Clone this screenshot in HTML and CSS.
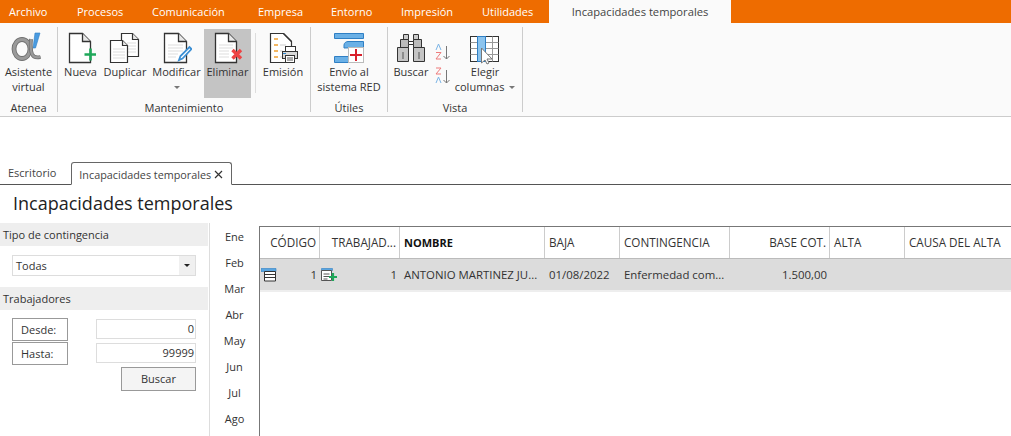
FILE: index.html
```html
<!DOCTYPE html>
<html lang="es">

<head>
    <meta charset="UTF-8">
    <title>Incapacidades temporales</title>
    <link rel="stylesheet" href="styles.css">
</head>

<body>
    <div class="menu-bar">
        <span>Archivo</span>
        <span>Procesos</span>
        <span>Comunicación</span>
        <span>Empresa</span>
        <span>Entorno</span>
        <span>Impresión</span>
        <span>Utilidades</span>
        <span class="menu-active">Incapacidades temporales</span>
    </div>

    <div class="ribbon">
        <div class="group group-atenea">
            <div class="group-items">
                <div class="rb-btn btn-asistente">
                    <svg class="rb-icon" width="38" height="34" viewBox="0 0 38 34">
                        <path d="M25 2h5l-4.500 15h-2.500z" fill="#4a9be0" stroke="#2f7fc4" stroke-width="0.600"/>
                        <ellipse cx="12" cy="18" rx="8" ry="9.500" fill="none" stroke="#6f6f6f" stroke-width="4.800"/>
                        <ellipse cx="12" cy="18" rx="8" ry="9.500" fill="none" stroke="#9a9a9a" stroke-width="3"/>
                        <path d="M21 8c-.5 6-.5 11 1 15 1.500 3.500 4.500 4 8.500 3" fill="none" stroke="#6f6f6f" stroke-width="3.800"/>
                        <path d="M21 8c-.5 6-.5 11 1 15 1.500 3.500 4.500 4 8.500 3" fill="none" stroke="#9a9a9a" stroke-width="2.200"/>
                    </svg>
                    <span>Asistente<br>virtual</span>
                </div>
            </div>
            <div class="group-name">Atenea</div>
        </div>

        <div class="group group-mant">
            <div class="group-items">
                <div class="rb-btn btn-nueva">
                    <svg class="rb-icon" width="30" height="34" viewBox="0 0 30 34">
                        <path d="M3.500 2.500h13l8 8v21h-21z" fill="#fff" stroke="#333" stroke-width="1.300"/>
                        <path d="M16.500 2.500v8h8" fill="#e8e8e8" stroke="#333" stroke-width="1.300"/>
                        <path d="M18.500 23.500h12M24.500 17.500v12" stroke="#1fa85a" stroke-width="2.600"/>
                    </svg>
                    <span>Nueva</span>
                </div>
                <div class="rb-btn btn-duplicar">
                    <svg class="rb-icon" width="32" height="34" viewBox="0 0 32 34">
                        <path d="M12.500 2.500h11l6 6v17h-17z" fill="#fff" stroke="#333" stroke-width="1.200"/>
                        <path d="M23.500 2.500v6h6" fill="#e8e8e8" stroke="#333" stroke-width="1.200"/>
                        <path d="M18 12h9M18 15h9M18 18h9M18 21h9" stroke="#ddd"/>
                        <path d="M1.500 9.500h12l5 5v17h-17z" fill="#fff" stroke="#333" stroke-width="1.200"/>
                        <path d="M13.500 9.500v5h5" fill="#e8e8e8" stroke="#333" stroke-width="1.200"/>
                        <path d="M4 18h12M4 21h12M4 24h12M4 27h12" stroke="#ddd"/>
                    </svg>
                    <span>Duplicar</span>
                </div>
                <div class="rb-btn btn-modificar">
                    <svg class="rb-icon" width="30" height="34" viewBox="0 0 30 34">
                        <path d="M2.500 2.500h14l8 8v21h-22z" fill="#fff" stroke="#333" stroke-width="1.300"/>
                        <path d="M16.500 2.500v8h8" fill="#e8e8e8" stroke="#333" stroke-width="1.300"/>
                        <path d="M6 14h15M6 17h15M6 20h15M6 23h10M6 26h8" stroke="#ddd"/>
                        <path d="M17 29l1.500-4 9-9 2 2-9 9.500z" fill="#fff" stroke="#3b8fd4" stroke-width="1.800"/>
                    </svg>
                    <span>Modificar</span>
                    <i class="caret"></i>
                </div>
                <div class="rb-btn btn-eliminar">
                    <svg class="rb-icon" width="30" height="34" viewBox="0 0 30 34">
                        <path d="M2.500 2.500h13l8 8v21h-21z" fill="#fff" stroke="#333" stroke-width="1.300"/>
                        <path d="M15.500 2.500v8h8" fill="#e8e8e8" stroke="#333" stroke-width="1.300"/>
                        <path d="M6 14h14M6 17h14M6 20h10M6 23h10M6 26h10" stroke="#ddd"/>
                        <path d="M19.500 19l8.500 8.500M28 19l-8.500 8.500" stroke="#ee4444" stroke-width="3.400"/>
                    </svg>
                    <span>Eliminar</span>
                </div>
                <div class="rb-sep"></div>
                <div class="rb-btn btn-emision">
                    <svg class="rb-icon" width="30" height="34" viewBox="0 0 30 34">
                        <path d="M2.500 2.500h13l8 8v21h-21z" fill="#fff" stroke="#333" stroke-width="1.200"/>
                        <path d="M15.500 2.500l8 8" stroke="#333" stroke-width="1.200"/>
                        <path d="M6 8h4M6 14h4M6 20h4M6 26h4" stroke="#f0a030" stroke-width="1.300"/>
                        <path d="M12 14h6M12 20h3M12 26h3" stroke="#ccc"/>
                        <rect x="17.500" y="15.500" width="10" height="6" fill="#fff" stroke="#333"/>
                        <rect x="14.500" y="20.500" width="15" height="7" fill="#d8d8d8" stroke="#333"/>
                        <rect x="17.500" y="24.500" width="9" height="7" fill="#fff" stroke="#333"/>
                        <path d="M19 27h6M19 29h6" stroke="#555"/>
                        <path d="M15 22.500h3" stroke="#2f86cc"/>
                    </svg>
                    <span>Emisión</span>
                </div>
            </div>
            <div class="group-name">Mantenimiento</div>
        </div>

        <div class="group group-utiles">
            <div class="group-items">
                <div class="rb-btn btn-envio">
                    <svg class="rb-icon" width="32" height="34" viewBox="0 0 32 34">
                        <path d="M1.500 2.500h29v5h-29z" fill="#6ab0e6" stroke="#2f7fc4"/>
                        <path d="M11 17v-3c0-2 2-3.500 4-3.500h15.500v6z" fill="#6ab0e6" stroke="#2f7fc4"/>
                        <path d="M1.500 25.500h15v6h-15z" fill="#6ab0e6" stroke="#2f7fc4"/>
                        <rect x="15.500" y="16.500" width="15" height="15" fill="#fff" stroke="#bbb"/>
                        <path d="M23 18v12M17 24h12" stroke="#d8202c" stroke-width="2"/>
                    </svg>
                    <span>Envío al<br>sistema RED</span>
                </div>
            </div>
            <div class="group-name">Útiles</div>
        </div>

        <div class="group group-vista">
            <div class="group-items">
                <div class="rb-btn btn-buscar">
                    <svg class="rb-icon" width="32" height="34" viewBox="0 0 32 34">
                        <path d="M8.500 3.500h5v5h-5zM18.500 3.500h5v5h-5z" fill="#ccc" stroke="#333"/>
                        <path d="M5.500 8.500h8v8h-8zM18.500 8.500h8v8h-8z" fill="#bbb" stroke="#333"/>
                        <path d="M2.500 16.500h11v14h-11zM18.500 16.500h11v14h-11z" fill="#c4c4c4" stroke="#333"/>
                        <path d="M13.500 10.500h5v3h-5z" fill="#fff" stroke="#333"/>
                        <path d="M8 21v7M24 21v7" stroke="#555"/>
                    </svg>
                    <span>Buscar</span>
                </div>
                <div class="sort-stack">
                    <svg width="16" height="17" viewBox="0 0 16 17">
                        <path d="M1 7l2.500-6 2.500 6" fill="none" stroke="#7ab4e6"/>
                        <path d="M1 9.500h5l-5 6.500h5" fill="none" stroke="#ee7b7b"/>
                        <path d="M11.500 3v13M8.500 13l3 3 3-3" fill="none" stroke="#777"/>
                    </svg>
                    <svg width="16" height="17" viewBox="0 0 16 17">
                        <path d="M1 1h5l-5 6h5" fill="none" stroke="#ee7b7b"/>
                        <path d="M1 16l2.500-6 2.500 6" fill="none" stroke="#7ab4e6"/>
                        <path d="M11.500 3v13M8.500 13l3 3 3-3" fill="none" stroke="#777"/>
                    </svg>
                </div>
                <div class="rb-btn btn-columnas">
                    <svg class="rb-icon" width="32" height="34" viewBox="0 0 32 34">
                        <rect x="1.500" y="5.500" width="28" height="25" fill="#fff" stroke="#333"/>
                        <path d="M1.500 11.500h28M1.500 17.500h28M1.500 23.500h28M23.500 5.500v25" stroke="#999"/>
                        <rect x="8.500" y="5.500" width="8" height="25" fill="#8cc4ee" stroke="#2f7fc4"/>
                        <path d="M12.500 17v15l3.500-3 2 4 2-1-2-4h5z" fill="#fff" stroke="#777"/>
                    </svg>
                    <span>Elegir<br>columnas <i class="caret caret-inline"></i></span>
                </div>
            </div>
            <div class="group-name">Vista</div>
        </div>
    </div>

    <div class="doc-tabs">
        <span class="doc-tab">Escritorio</span>
        <span class="doc-tab doc-tab-active">Incapacidades temporales
            <svg width="9" height="9" viewBox="0 0 9 9"><path d="M1 1l7 7M8 1l-7 7" stroke="#333" stroke-width="1.200"/></svg>
        </span>
    </div>

    <h1 class="page-title">Incapacidades temporales</h1>

    <div class="content">
        <div class="side-panel">
            <div class="side-head">Tipo de contingencia</div>
            <div class="select-box">
                <span>Todas</span>
                <span class="select-arrow"><i class="caret caret-dark"></i></span>
            </div>
            <div class="side-head side-head-2">Trabajadores</div>
            <div class="range-row">
                <span class="range-label">Desde:</span>
                <span class="range-input">0</span>
            </div>
            <div class="range-row">
                <span class="range-label">Hasta:</span>
                <span class="range-input">99999</span>
            </div>
            <div class="search-row">
                <button class="search-btn">Buscar</button>
            </div>
        </div>

        <div class="months">
            <span>Ene</span>
            <span>Feb</span>
            <span>Mar</span>
            <span>Abr</span>
            <span>May</span>
            <span>Jun</span>
            <span>Jul</span>
            <span>Ago</span>
        </div>

        <div class="grid">
            <div class="grid-row grid-header">
                <div class="cell right">CÓDIGO</div>
                <div class="cell right">TRABAJAD...</div>
                <div class="cell strong">NOMBRE</div>
                <div class="cell">BAJA</div>
                <div class="cell">CONTINGENCIA</div>
                <div class="cell right">BASE COT.</div>
                <div class="cell">ALTA</div>
                <div class="cell">CAUSA DEL ALTA</div>
            </div>
            <div class="grid-row grid-data">
                <div class="cell right">
                    <svg class="row-icon" width="16" height="14" viewBox="0 0 16 14">
                        <path d="M0 .5h15v3h-15z" fill="#5aa5e0" stroke="#2f7fc4" stroke-width="0.600"/>
                        <path d="M3.500 3.500h11v9.500h-11z" fill="#fff" stroke="#333"/>
                        <path d="M3.500 6.500h11M3.500 9.500h11" stroke="#333"/>
                    </svg>
                    1
                </div>
                <div class="cell right">
                    <svg class="row-icon" width="17" height="14" viewBox="0 0 17 14">
                        <path d="M.5.500h11v2h-11z" fill="#5aa5e0" stroke="#2f7fc4" stroke-width="0.600"/>
                        <path d="M.5 2.500h10v10h-10z" fill="#fff" stroke="#555"/>
                        <path d="M2.500 6h6M2.500 8.500h6M2.500 11h4" stroke="#555"/>
                        <path d="M8 9h8M12 5v8" stroke="#1fa85a" stroke-width="2.200"/>
                    </svg>
                    1
                </div>
                <div class="cell">ANTONIO MARTINEZ JU...</div>
                <div class="cell">01/08/2022</div>
                <div class="cell">Enfermedad com...</div>
                <div class="cell right">1.500,00</div>
                <div class="cell"></div>
                <div class="cell"></div>
            </div>
        </div>
    </div>
</body>

</html>
```

FILE: styles.css
```css
body {
    font-family: 'Open Sans', 'Noto Sans', sans-serif;
    font-size: 11px;
    color: #333;
    background-color: #fff;
    margin: 0;
    padding: 0;
    height: 436px;
    overflow: hidden;
}

/* top menu */
.menu-bar {
    display: grid;
    grid-template-columns: 68px 75px 106px 73px 70px 81px 67px 182px;
    height: 23px;
    padding-left: 9px;
    background-color: #ee6c00;
    color: #fff;
    line-height: 24px;
}

.menu-active {
    background-color: #fafafa;
    color: #444;
    font-size: 11.2px;
    text-align: center;
}

/* ribbon */
.ribbon {
    display: flex;
    height: 94px;
    background-color: #fafafa;
    border-bottom: 1px solid #ccc;
    box-sizing: border-box;
    padding-top: 4px;
}

.group {
    display: flex;
    flex-direction: column;
    border-right: 1px solid #ccc;
    margin-bottom: 4px;
}

.group-atenea { width: 57px; }
.group-mant { width: 252px; }
.group-utiles { width: 76px; }
.group-vista { width: 134px; }

.group-items {
    display: flex;
    flex: none;
    height: 70px;
    padding-top: 2px;
}

.group-name {
    text-align: center;
    line-height: 16px;
    margin-top: 1px;
}

.rb-btn {
    display: flex;
    flex-direction: column;
    align-items: center;
    text-align: center;
    line-height: 15px;
    box-sizing: border-box;
}

.rb-btn span {
    white-space: nowrap;
}

.rb-icon {
    display: block;
    margin-top: 2px;
    margin-bottom: -1px;
    height: 34px;
    flex: none;
}

.btn-asistente { width: 57px; }
.btn-nueva { width: 45px; }
.btn-duplicar { width: 44px; }
.btn-modificar { width: 57px; padding-left: 2px; }
.btn-eliminar { width: 47px; height: 69px; background-color: #c4c4c4; }
.btn-emision { width: 52px; }
.btn-envio { width: 76px; }
.btn-buscar { width: 44px; margin-left: 1px; }
.btn-columnas { width: 64px; }

.rb-sep {
    width: 1px;
    height: 60px;
    margin: 4px 1px 0 4px;
    background-color: #ddd;
}

.sort-stack {
    display: flex;
    flex-direction: column;
    gap: 7px;
    width: 18px;
    padding: 14px 0 0 2px;
}

.caret {
    display: block;
    width: 0;
    height: 0;
    margin-top: 7px;
    border-left: 3px solid transparent;
    border-right: 3px solid transparent;
    border-top: 3px solid #777;
}

.caret-inline {
    display: inline-block;
    margin: 0 0 2px 2px;
}

.caret-dark {
    margin: 0;
    border-top-color: #222;
}

/* document tabs */
.doc-tabs {
    display: flex;
    align-items: flex-end;
    height: 24px;
    margin-top: 43px;
    padding-left: 8px;
    border-bottom: 1px solid #555;
}

.doc-tab {
    line-height: 23px;
    color: #444;
    margin-right: 15px;
}

.doc-tab-active {
    width: 161px;
    height: 23px;
    padding-left: 7px;
    margin-right: 0;
    margin-bottom: -1px;
    font-size: 10.8px;
    background-color: #fff;
    border: 1px solid #666;
    border-bottom: 1px solid #fff;
    border-radius: 3px 3px 0 0;
    box-sizing: border-box;
    white-space: nowrap;
}

.page-title {
    margin: 6px 0 7px 13px;
    font-size: 18px;
    font-weight: 400;
    line-height: 25px;
    color: #222;
}

/* filters */
.content {
    display: flex;
    height: 213px;
    align-items: flex-start;
}

.side-panel {
    width: 209px;
    height: 213px;
    flex: none;
    border-right: 1px solid #ddd;
}

.side-head {
    height: 23px;
    line-height: 23px;
    padding-left: 3px;
    background-color: #eee;
    margin-right: 1px;
    color: #333;
}

.side-head-2 {
    margin-top: 11px;
    margin-bottom: 7px;
}

.select-box {
    display: flex;
    justify-content: space-between;
    height: 21px;
    line-height: 20px;
    margin: 9px 13px 0 12px;
    padding-left: 3px;
    border: 1px solid #ddd;
    box-sizing: border-box;
}

.select-arrow {
    display: flex;
    align-items: center;
    justify-content: center;
    width: 16px;
    background-color: #f0f0f0;
}

.range-row {
    display: flex;
    align-items: center;
    justify-content: space-between;
    height: 24px;
    padding: 0 13px 0 12px;
}

.range-label {
    width: 56px;
    height: 23px;
    line-height: 22px;
    padding-left: 8px;
    border: 1px solid #999;
    box-sizing: border-box;
}

.range-input {
    width: 100px;
    height: 20px;
    line-height: 18px;
    padding-right: 1px;
    text-align: right;
    border: 1px solid #ddd;
    box-sizing: border-box;
}

.search-row {
    display: flex;
    justify-content: flex-end;
    padding: 2px 13px 0 0;
}

.search-btn {
    width: 75px;
    height: 24px;
    font-family: inherit;
    font-size: 11px;
    color: #333;
    background-color: #f4f4f4;
    border: 1px solid #999;
    padding: 0 0 2px;
}

/* months */
.months {
    display: flex;
    flex-direction: column;
    width: 49px;
    flex: none;
    padding-top: 1px;
    text-align: center;
    line-height: 26px;
}

/* table */
.grid {
    flex: 1;
    height: 210px;
    margin-top: 3px;
    border-top: 1px solid #777;
    border-left: 1px solid #777;
}

.grid-row {
    display: grid;
    grid-template-columns: 60px 80px 145px 75px 110px 100px 75px 1fr;
}

.grid-header {
    height: 32px;
    line-height: 31px;
    font-size: 11.7px;
    border-bottom: 1px solid #bbb;
    box-sizing: border-box;
}

.grid-header .cell {
    border-right: 1px solid #ccc;
}

.grid-header .cell:last-child {
    border-right: none;
}

.grid-data {
    height: 31px;
    line-height: 31px;
    font-size: 11.4px;
    background-color: #dcdcdc;
    border-bottom: 2px solid #eee;
}

.cell {
    position: relative;
    padding: 0 3px 0 4px;
    white-space: nowrap;
    overflow: hidden;
}

.right {
    text-align: right;
}

.strong {
    font-size: 11px;
    font-weight: 700;
    color: #111;
}

.row-icon {
    position: absolute;
    left: 1px;
    top: 9px;
}
```
